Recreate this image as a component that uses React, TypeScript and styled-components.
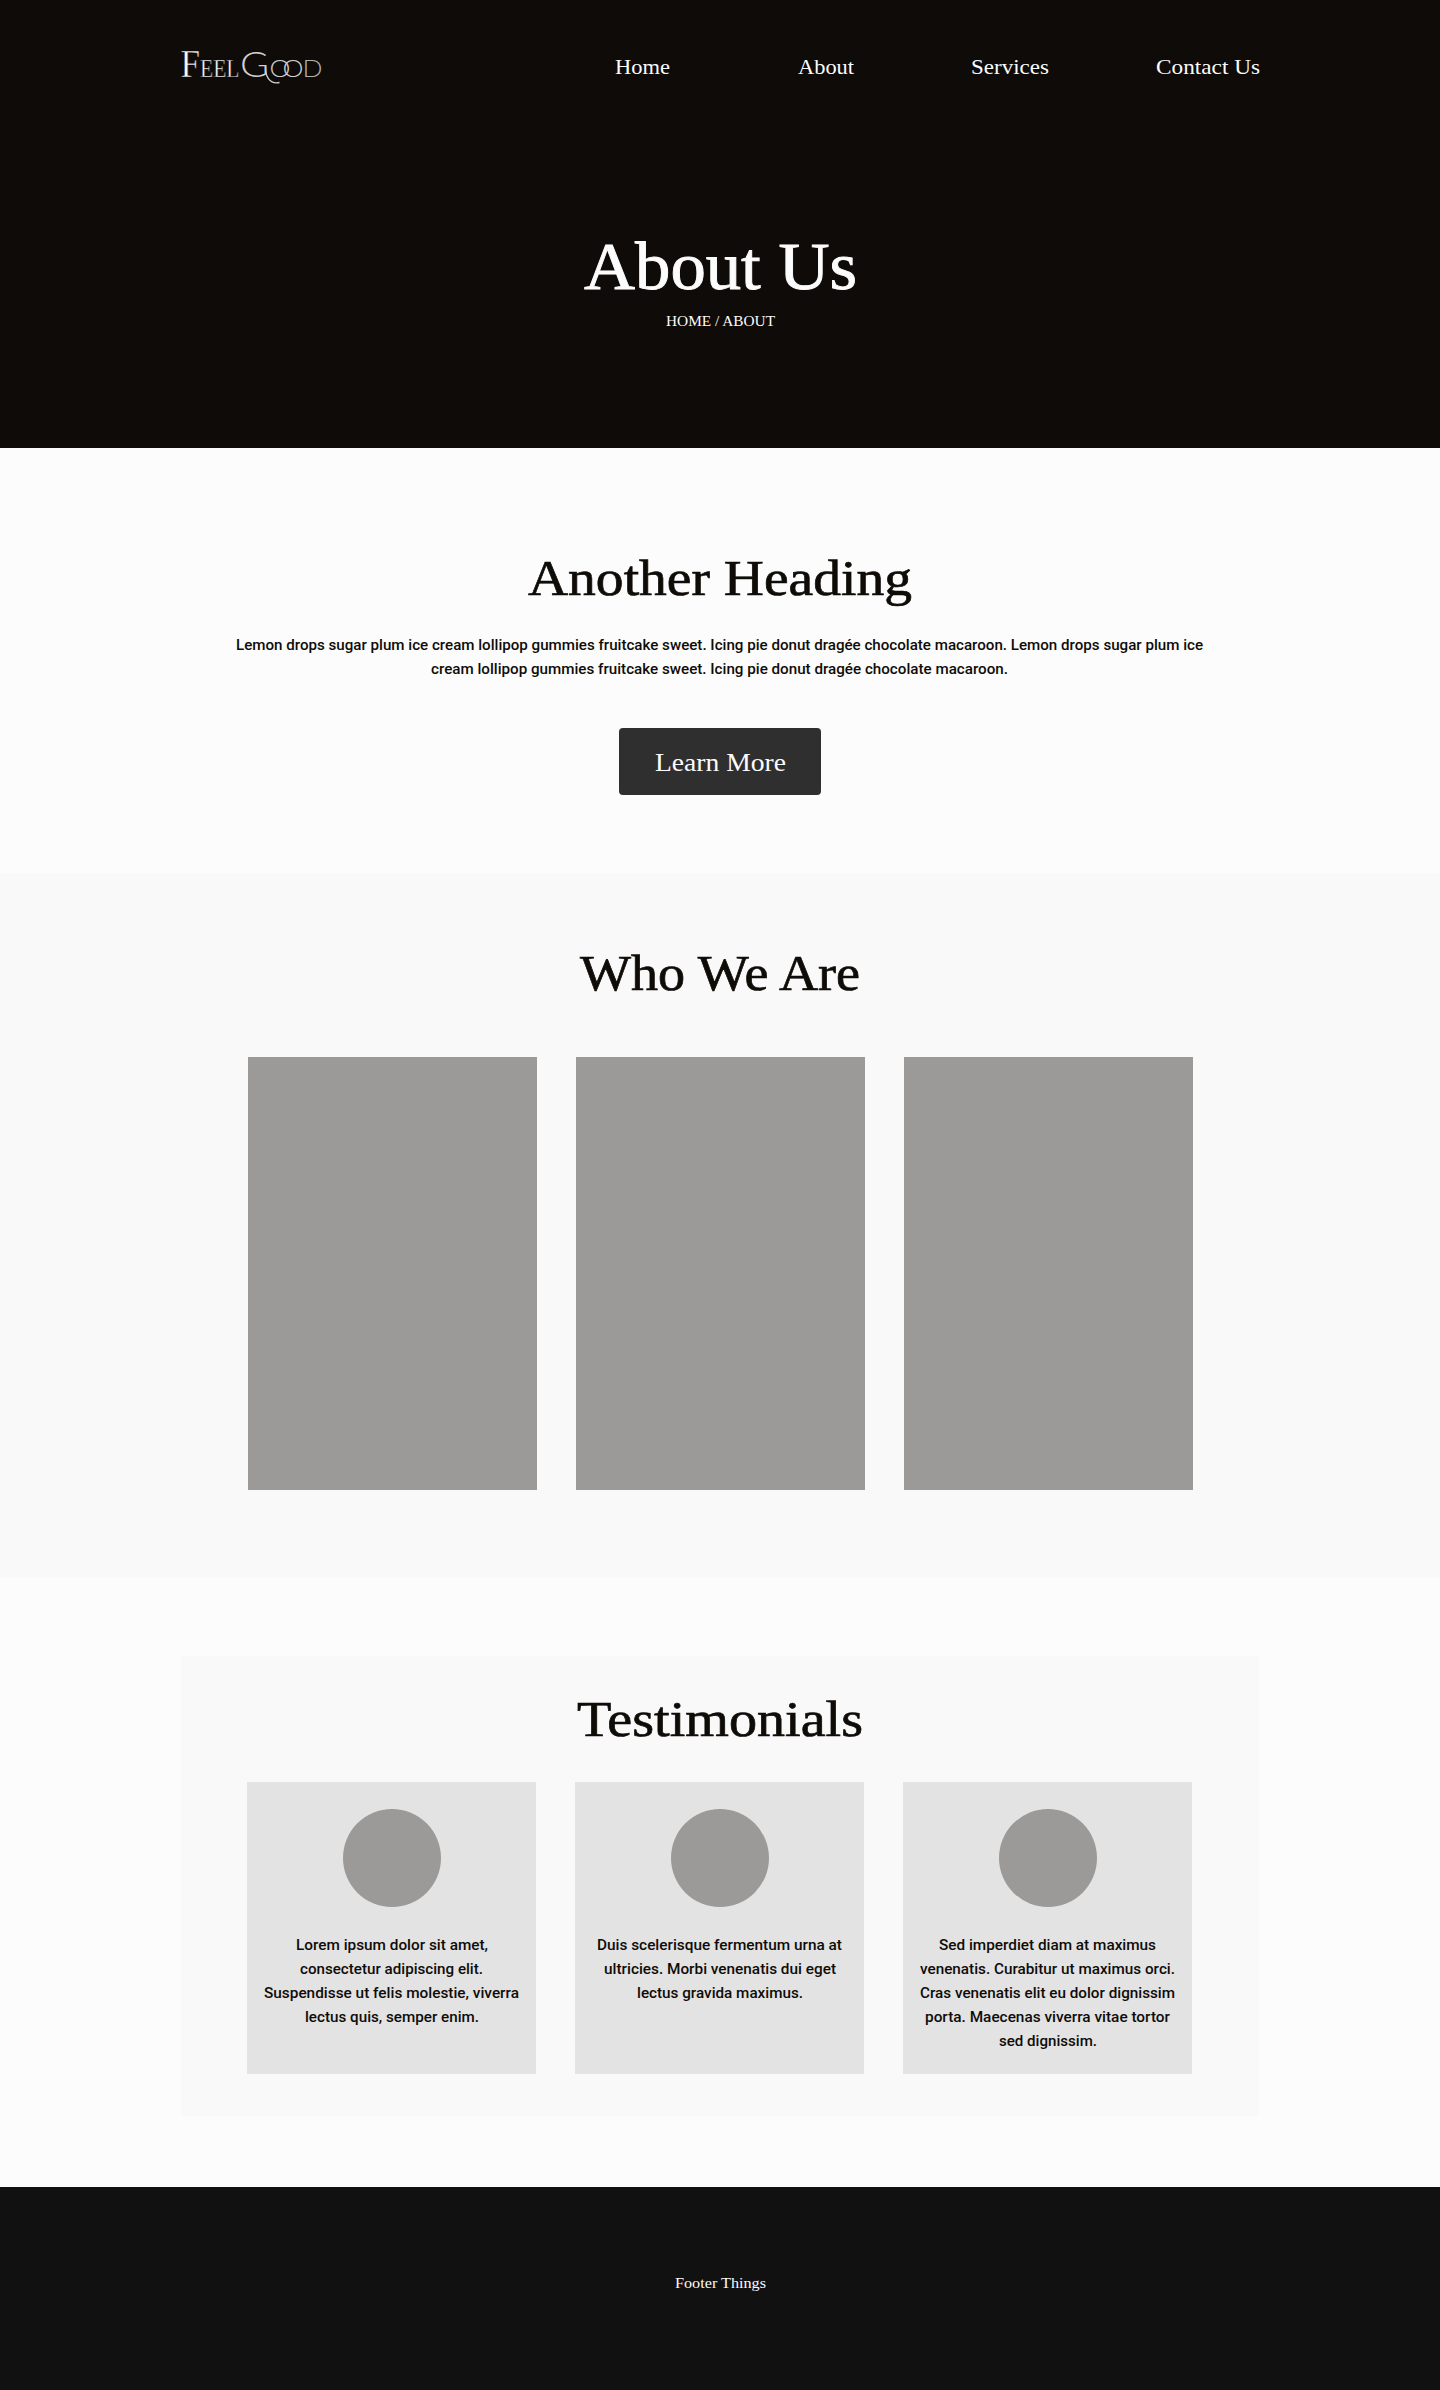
import React, { useLayoutEffect, useRef, useState } from "react";
import styled, { createGlobalStyle } from "styled-components";

const serif = `"Liberation Serif", "Times New Roman", serif`;
const sans = `Roboto, "Noto Sans", sans-serif`;
const ink = "#0f0c08";
const night = "#0e0b08";
const paper = "#fcfcfc";

const GlobalStyle = createGlobalStyle`
  *, *::before, *::after { box-sizing: border-box; }
  body { margin: 0; background: ${paper}; color: ${ink}; font-family: ${serif}; }
  h1, h2, p, ul, figure { margin: 0; padding: 0; }
`;

const FitBox = styled.span`
  display: block;
  width: max-content;
  white-space: nowrap;
  transform-origin: 0 50%;
`;

const FitFrame = styled.span<{ $width: number }>`
  display: block;
  width: ${(p) => p.$width}px;
  margin: 0 auto;
`;

/* A single line of text stretched horizontally to a given measure. */
function Fit({ width, children }: { width: number; children: string }) {
  const ref = useRef<HTMLSpanElement>(null);
  const [scale, setScale] = useState(1);
  useLayoutEffect(() => {
    if (!ref.current) return;
    const natural = parseFloat(getComputedStyle(ref.current).width);
    if (natural > 0) setScale(width / natural);
  }, [width, children]);
  return (
    <FitFrame $width={width}>
      <FitBox ref={ref} style={{ transform: `scaleX(${scale})` }}>
        {children}
      </FitBox>
    </FitFrame>
  );
}

const Hero = styled.header`
  height: 448px;
  background: ${night};
  color: ${paper};
`;

const TopBar = styled.div`
  width: 1080px;
  height: 134px;
  margin: 0 auto;
  display: flex;
  align-items: center;
  justify-content: space-between;
`;

const LogoMark = styled.svg`
  display: block;
  width: 146px;
  height: 52px;
  overflow: visible;
  font-family: ${serif};
`;

const LogoRound = styled.g`
  font-family: Lato, sans-serif;
  font-weight: 300;
`;

const Nav = styled.nav`
  display: grid;
  grid-template-columns: 184px 184px 184px 158px;
  font-size: 21px;
  line-height: 28px;
`;

const NavLink = styled.a<{ $end?: boolean }>`
  display: flex;
  justify-content: ${(p) => (p.$end ? "flex-end" : "center")};
  color: inherit;
  text-decoration: none;

  & > span { margin: 0; }
`;

const HeroTitle = styled.h1`
  margin-top: 92px;
  font-size: 68px;
  font-weight: 400;
  line-height: 80px;
  -webkit-text-stroke: 0.9px currentColor;
`;

const Breadcrumb = styled.p`
  margin-top: 5px;
  font-size: 15px;
  line-height: 20px;
`;

const SectionTitle = styled.h2`
  font-size: 51px;
  font-weight: 400;
  line-height: 64px;
  -webkit-text-stroke: 0.7px currentColor;
`;

const Copy = styled.p`
  font-family: ${sans};
  font-size: 15.5px;
  font-weight: 500;
  line-height: 24px;
`;

const Intro = styled.section`
  height: 425px;
  padding-top: 98px;
  display: flex;
  flex-direction: column;
  align-items: center;

  ${Copy} { margin: 23px 1px 0 0; }
`;

const Button = styled.button`
  width: 202px;
  height: 67px;
  margin-top: 47px;
  padding: 2px 0 0;
  border: 0;
  border-radius: 4px;
  background: #2f2f2f;
  color: ${paper};
  font-family: ${serif};
  font-size: 25.5px;
  line-height: 32px;
`;

const Team = styled.section`
  height: 704px;
  padding-top: 68px;
  background: #f9f9f9;
`;

const Columns = styled.div<{ $top: number }>`
  display: grid;
  grid-template-columns: repeat(3, 289px);
  gap: 39px;
  justify-content: center;
  margin-top: ${(p) => p.$top}px;
`;

const Portrait = styled.figure`
  height: 433px;
  background: #9b9a98;
`;

const Testimonials = styled.section`
  width: 1078px;
  height: 460px;
  margin: 79px auto 71px;
  padding-top: 31px;
  background: #f9f9f9;

  ${Columns} { margin-left: -1px; margin-right: 1px; }
`;

const Card = styled.article`
  height: 292px;
  padding: 27px 0 0 1px;
  background: #e3e3e3;

  ${Copy} { margin-top: 26px; }
`;

const Avatar = styled.div`
  width: 98px;
  height: 98px;
  margin: 0 auto;
  border-radius: 50%;
  background: #9b9a98;
`;

const Footer = styled.footer`
  height: 203px;
  padding-top: 86px;
  background: #111;
  color: ${paper};
  font-size: 15px;
  line-height: 20px;
`;

type Line = [text: string, width: number];

const links: Line[] = [
  ["Home", 55],
  ["About", 56],
  ["Services", 78],
  ["Contact Us", 104],
];

const intro: Line[] = [
  ["Lemon drops sugar plum ice cream lollipop gummies fruitcake sweet. Icing pie donut dragée chocolate macaroon. Lemon drops sugar plum ice", 967],
  ["cream lollipop gummies fruitcake sweet. Icing pie donut dragée chocolate macaroon.", 577],
];

const quotes: Line[][] = [
  [
    ["Lorem ipsum dolor sit amet,", 192],
    ["consectetur adipiscing elit.", 183],
    ["Suspendisse ut felis molestie, viverra", 255],
    ["lectus quis, semper enim.", 174],
  ],
  [
    ["Duis scelerisque fermentum urna at", 245],
    ["ultricies. Morbi venenatis dui eget", 232],
    ["lectus gravida maximus.", 166],
  ],
  [
    ["Sed imperdiet diam at maximus", 217],
    ["venenatis. Curabitur ut maximus orci.", 255],
    ["Cras venenatis elit eu dolor dignissim", 255],
    ["porta. Maecenas viverra vitae tortor", 245],
    ["sed dignissim.", 98],
  ],
];

function Lines({ lines }: { lines: Line[] }) {
  return (
    <Copy>
      {lines.map(([text, width]) => (
        <Fit key={text} width={width}>{text}</Fit>
      ))}
    </Copy>
  );
}

function Logo() {
  return (
    <LogoMark viewBox="0 0 146 52" role="img" aria-label="Feel Good">
      <g fill="#fafafa" stroke={night} strokeWidth="0.45">
        <text x="0.5" y="36" fontSize="39" textLength="19.500" lengthAdjust="spacingAndGlyphs">F</text>
        <text x="20" y="36" fontSize="25.500" textLength="39.500" lengthAdjust="spacingAndGlyphs">EEL</text>
      </g>
      <LogoRound fill="#d0d0d0">
        <text x="60" y="36" fontSize="36" textLength="29" lengthAdjust="spacingAndGlyphs">G</text>
        <path d="M85.500 26 C85.500 35 89 43.500 99.500 41.500" fill="none" stroke="#d0d0d0" strokeWidth="1.3" />
        <text x="89.500" y="36" fontSize="23.500" textLength="21" lengthAdjust="spacingAndGlyphs">O</text>
        <text x="102.500" y="36" fontSize="23.500" textLength="21" lengthAdjust="spacingAndGlyphs">O</text>
        <text x="122.500" y="36" fontSize="23.500" fill="#b0b0b0" textLength="20" lengthAdjust="spacingAndGlyphs">D</text>
      </LogoRound>
    </LogoMark>
  );
}

export default function App() {
  return (
    <>
      <GlobalStyle />
      <Hero>
        <TopBar>
          <Logo />
          <Nav>
            {links.map(([text, width], i) => (
              <NavLink key={text} href="#" $end={i === links.length - 1}>
                <Fit width={width}>{text}</Fit>
              </NavLink>
            ))}
          </Nav>
        </TopBar>
        <HeroTitle><Fit width={273}>About Us</Fit></HeroTitle>
        <Breadcrumb><Fit width={109}>HOME / ABOUT</Fit></Breadcrumb>
      </Hero>
      <main>
        <Intro>
          <SectionTitle><Fit width={384}>Another Heading</Fit></SectionTitle>
          <Lines lines={intro} />
          <Button><Fit width={131}>Learn More</Fit></Button>
        </Intro>
        <Team>
          <SectionTitle><Fit width={280}>Who We Are</Fit></SectionTitle>
          <Columns $top={52}>
            <Portrait />
            <Portrait />
            <Portrait />
          </Columns>
        </Team>
        <Testimonials>
          <SectionTitle><Fit width={286}>Testimonials</Fit></SectionTitle>
          <Columns $top={31}>
            {quotes.map((lines) => (
              <Card key={lines[0][0]}>
                <Avatar />
                <Lines lines={lines} />
              </Card>
            ))}
          </Columns>
        </Testimonials>
      </main>
      <Footer><Fit width={91}>Footer Things</Fit></Footer>
    </>
  );
}
